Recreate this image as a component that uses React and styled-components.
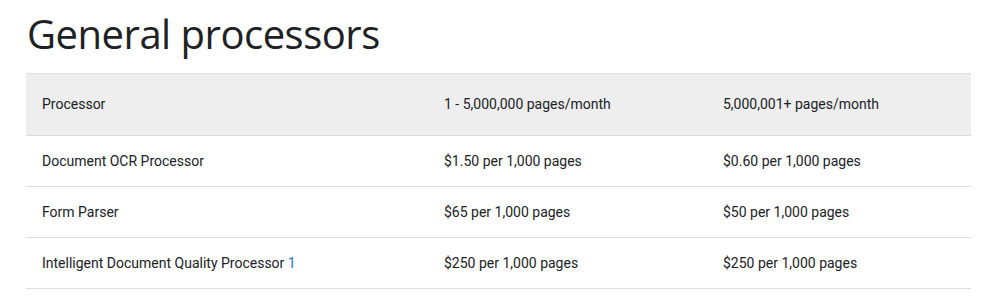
import React from 'react';
import styled, { createGlobalStyle } from 'styled-components';

const GlobalStyle = createGlobalStyle`
  body {
    margin: 0;
    background: #fff;
    font-family: Roboto, "Liberation Sans", sans-serif;
    color: #202124;
  }
`

const Page = styled.div`
  padding: 8px 31px 0 26px;
`

const Title = styled.h2`
  margin: 0 0 13px 1px;
  font-family: "Open Sans", "Liberation Sans", sans-serif;
  font-weight: 400;
  font-size: 40px;
  line-height: 52px;
  letter-spacing: -0.5px;
  color: #202124;
`

const Table = styled.table`
  width: 945px;
  border-collapse: collapse;
  font-size: 14px;
  line-height: 20px;
  color: #202124;
`

const HeadRow = styled.tr`
  background: #eeeeee;
  border-top: 1px solid #e0e0e0;
  border-bottom: 1px solid #dadce0;
`

const Row = styled.tr`
  border-bottom: 1px solid #dadce0;
`

const Cell = styled.td`
  padding: ${({ head }) => (head ? '20px 16px 21px' : '15px 16px')};
  text-align: left;
  font-weight: 400;
  width: ${({ w }) => w || 'auto'};
`

const Note = styled.a`
  color: #1a73e8;
  text-decoration: none;
`

const rows = [
  { name: 'Document OCR Processor', low: '$1.50 per 1,000 pages', high: '$0.60 per 1,000 pages' },
  { name: 'Form Parser', low: '$65 per 1,000 pages', high: '$50 per 1,000 pages' },
  { name: 'Intelligent Document Quality Processor', note: '1', low: '$250 per 1,000 pages', high: '$250 per 1,000 pages' },
]

function App() {
  return (
    <>
      <GlobalStyle />
      <Page>
        <Title>General processors</Title>
        <Table>
          <thead>
            <HeadRow>
              <Cell as="th" head w="370px">Processor</Cell>
              <Cell as="th" head w="247px">1 - 5,000,000 pages/month</Cell>
              <Cell as="th" head>5,000,001+ pages/month</Cell>
            </HeadRow>
          </thead>
          <tbody>
            {rows.map((r, i) => (
              <Row key={i}>
                <Cell>
                  {r.name}
                  {r.note && <> <Note href="#">{r.note}</Note></>}
                </Cell>
                <Cell>{r.low}</Cell>
                <Cell>{r.high}</Cell>
              </Row>
            ))}
          </tbody>
        </Table>
      </Page>
    </>
  );
}

export default App;
